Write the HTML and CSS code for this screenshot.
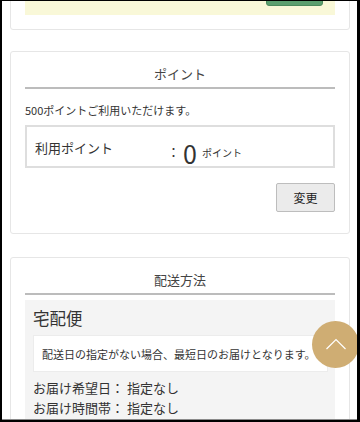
FILE: index.html
```html
<!DOCTYPE html>
<html lang="ja">
<head>
<meta charset="utf-8">
<title>ご注文手続き</title>
<link rel="stylesheet" href="styles.css">
</head>
<body>
<div class="page">
  <section class="card card-top">
    <div class="notice">
      <span class="green-btn"></span>
    </div>
  </section>

  <section class="card card-point">
    <h2 class="card-title">ポイント</h2>
    <p class="point-note">500ポイントご利用いただけます。</p>
    <div class="point-box">
      <span class="point-label">利用ポイント</span>
      <span class="point-colon">：</span>
      <span class="point-value">0</span>
      <span class="point-unit">ポイント</span>
    </div>
    <div class="btn-row">
      <button class="change-btn" type="button">変更</button>
    </div>
  </section>

  <section class="card card-ship">
    <h2 class="card-title">配送方法</h2>
    <div class="ship-box">
      <div class="ship-name">宅配便</div>
      <div class="ship-note">配送日の指定がない場合、最短日のお届けとなります。</div>
      <div class="ship-line">お届け希望日：&nbsp;指定なし</div>
      <div class="ship-line">お届け時間帯：&nbsp;指定なし</div>
    </div>
  </section>
</div>
<a class="to-top" href="#" aria-label="ページトップへ">
  <svg width="22" height="12" viewBox="0 0 22 12"><polyline points="1.5,11 11,1.5 20.5,11" fill="none" stroke="#fff" stroke-width="1.2"/></svg>
</a>
</body>
</html>
```

FILE: styles.css
```css
* { box-sizing: border-box; }
html, body { margin: 0; padding: 0; }
html { background: #000; }
body {
  width: 360px;
  height: 422px;
  overflow: hidden;
  position: relative;
  background: #fff;
  border-style: solid;
  border-color: #000;
  border-width: 1px 3px 2px 2px;
  font-family: "Noto Sans CJK JP", "Noto Sans", sans-serif;
  color: #333;
}
body::after {
  content: "";
  position: absolute;
  left: 0; right: 0; bottom: 0;
  height: 1px;
  background: #8a8a8a;
}
.page { padding: 0 7px 0 8px; }
.card {
  border: 1px solid #e6e6e6;
  border-radius: 3px;
  padding: 12px 14px 21px;
}
.card-top {
  margin-top: -60px;
  padding: 14px 14px 14px;
}
.notice {
  height: 59px;
  background: #f9f8d8;
  display: flex;
  justify-content: flex-end;
  align-items: flex-end;
  padding: 0 12px 9px;
}
.green-btn {
  display: block;
  width: 57px;
  height: 50px;
  background: #5b9f6f;
  border: 1px solid #4b8a5d;
  border-radius: 3px;
}
.card-point { margin-top: 21px; }
.card-ship { margin-top: 23px; }
.card-title {
  margin: 0;
  font-size: 13px;
  font-weight: normal;
  line-height: 20px;
  text-align: center;
  color: #444;
  padding-bottom: 3px;
  border-bottom: 2px solid #bcbcbc;
}
.point-note {
  margin: 13px 0 0;
  font-size: 11px;
  line-height: 16px;
}
.point-box {
  margin-top: 7px;
  height: 43px;
  border: 2px solid #dedede;
  display: flex;
  align-items: center;
  padding: 0 8px;
}
.point-label {
  font-size: 13px;
  line-height: 20px;
  width: 132px;
  margin-top: 3px;
}
.point-colon {
  font-size: 13px;
  line-height: 20px;
  width: 16px;
  margin-top: 11px;
}
.point-value {
  font-size: 25px;
  line-height: 25px;
  margin-right: 5px;
  margin-top: 14px;
}
.point-unit {
  font-size: 10px;
  line-height: 14px;
  margin-top: 13px;
}
.btn-row {
  display: flex;
  justify-content: flex-end;
  margin-top: 15px;
}
.change-btn {
  width: 59px;
  height: 29px;
  background: #ebebeb;
  border: 1px solid #bdbdbd;
  border-radius: 2px;
  font-family: "Noto Sans CJK JP", sans-serif;
  font-size: 12px;
  color: #222;
  padding: 0;
}
.ship-box {
  margin-top: 5px;
  background: #f4f4f4;
  padding: 6px 7px 20px 8px;
}
.ship-name {
  font-size: 16.5px;
  line-height: 24px;
}
.ship-note {
  margin-top: 5px;
  background: #fff;
  border: 1px solid #ececec;
  height: 37px;
  display: flex;
  align-items: center;
  padding: 0 8px;
  font-size: 11px;
}
.ship-line {
  font-size: 13px;
  line-height: 20px;
}
.ship-note + .ship-line { margin-top: 6px; }
.to-top {
  position: absolute;
  left: 310px;
  top: 320px;
  width: 47px;
  height: 47px;
  border-radius: 50%;
  background: #cfad73;
  display: flex;
  align-items: center;
  justify-content: center;
}
.to-top svg { margin-top: -2px; }
```
